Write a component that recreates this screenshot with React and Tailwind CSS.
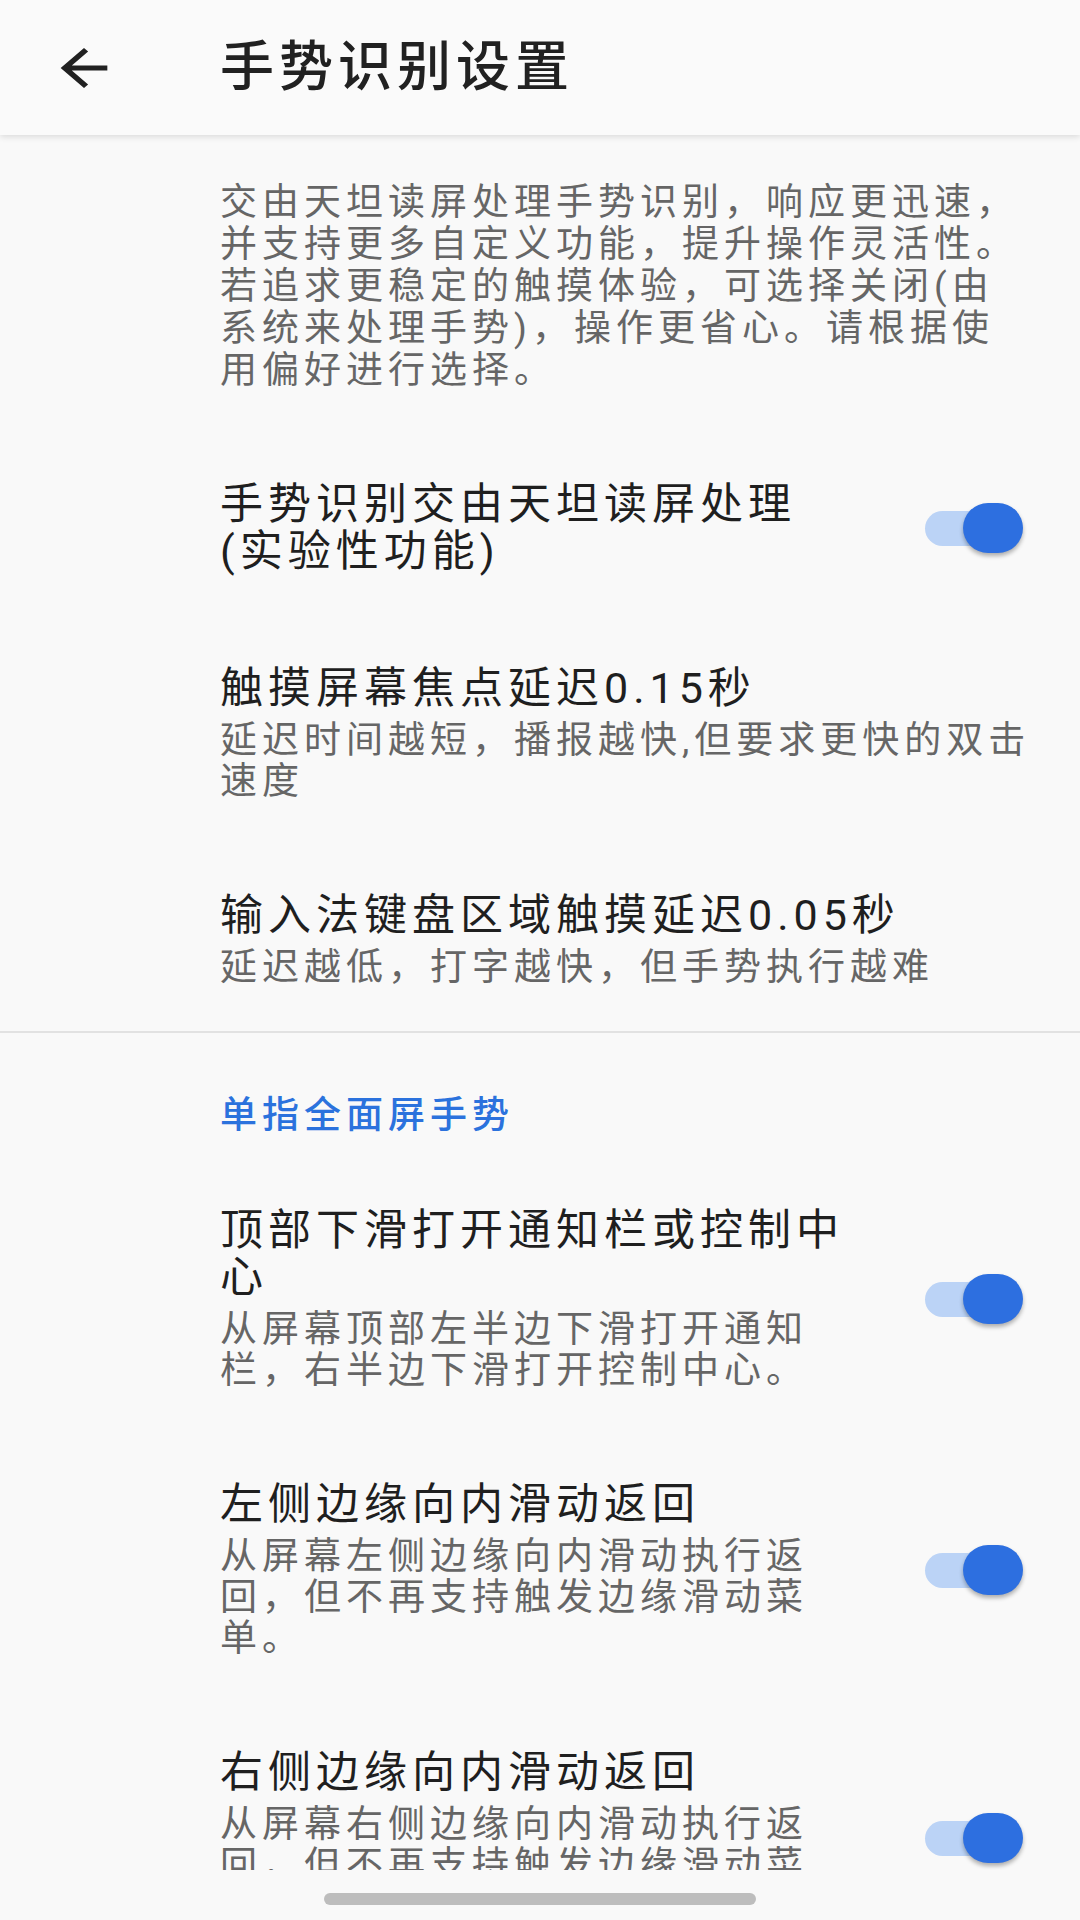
import React from 'react';

const Toggle = () => (
  <div className="relative h-[50px] w-[98px] shrink-0">
    <div className="absolute left-0 top-[8px] h-[35px] w-[82px] rounded-full bg-[#bbd3f6]" />
    <div className="absolute right-0 top-0 h-[50px] w-[60px] rounded-full bg-[#2d6fe0] shadow-[0_3px_4px_rgba(0,0,0,0.3)]" />
  </div>
);

const Lines = ({ lines }) =>
  lines.map((l, i) => (
    <React.Fragment key={i}>
      {i > 0 && <br />}
      {l}
    </React.Fragment>
  ));

const Row = ({ title, sub, toggle, className = 'py-[45px]' }) => (
  <div className={`flex items-center pl-[220px] pr-[57px] ${className}`}>
    <div className="flex-1 whitespace-nowrap">
      <div className="text-[43px] leading-[47px] tracking-[5px] text-[#1f1f1f]">
        <Lines lines={title} />
      </div>
      {sub && (
        <div className="mt-[8px] text-[37px] leading-[41px] tracking-[5px] text-[#666666]">
          <Lines lines={sub} />
        </div>
      )}
    </div>
    {toggle && <Toggle />}
  </div>
);

export default function App() {
  return (
    <div className="flex h-[1920px] w-[1080px] flex-col overflow-hidden bg-[#f9f9f9] font-['Roboto','Noto_Sans_CJK_SC',sans-serif]">
      <div className="relative z-10 flex h-[135px] shrink-0 items-center bg-[#fafafa] shadow-[0_2px_6px_rgba(0,0,0,0.12)]">
        <svg className="ml-[49px] h-[60px] w-[70px]" viewBox="0 0 24 24" preserveAspectRatio="none">
          <path d="M20 11H7.83l5.59-5.59L12 4l-8 8 8 8 1.41-1.41L7.83 13H20v-2z" fill="#212121" />
        </svg>
        <div className="ml-[101px] text-[54px] font-medium tracking-[5px] text-[#212121]">手势识别设置</div>
      </div>

      <div className="flex-1 overflow-hidden">
        <div className="whitespace-nowrap pb-[44px] pl-[220px] pt-[47px] text-[37px] leading-[42px] tracking-[5px] text-[#666666]">
          <Lines
            lines={[
              '交由天坦读屏处理手势识别，响应更迅速，',
              '并支持更多自定义功能，提升操作灵活性。',
              '若追求更稳定的触摸体验，可选择关闭(由',
              '系统来处理手势)，操作更省心。请根据使',
              '用偏好进行选择。',
            ]}
          />
        </div>

        <Row title={['手势识别交由天坦读屏处理', '(实验性功能)']} toggle />
        <Row
          title={['触摸屏幕焦点延迟0.15秒']}
          sub={['延迟时间越短，播报越快,但要求更快的双击', '速度']}
        />
        <Row
          title={['输入法键盘区域触摸延迟0.05秒']}
          sub={['延迟越低，打字越快，但手势执行越难']}
          className="pt-[45px] pb-[43px]"
        />

        <div className="h-[2px] bg-[#e2e2e2]" />

        <div className="pb-[25px] pl-[220px] pt-[62px] text-[37px] font-medium leading-[42px] tracking-[5px] text-[#2b72dd]">
          单指全面屏手势
        </div>

        <Row
          title={['顶部下滑打开通知栏或控制中', '心']}
          sub={['从屏幕顶部左半边下滑打开通知', '栏，右半边下滑打开控制中心。']}
          toggle
        />
        <Row
          title={['左侧边缘向内滑动返回']}
          sub={['从屏幕左侧边缘向内滑动执行返', '回，但不再支持触发边缘滑动菜', '单。']}
          toggle
        />
        <Row
          title={['右侧边缘向内滑动返回']}
          sub={['从屏幕右侧边缘向内滑动执行返', '回，但不再支持触发边缘滑动菜', '单。']}
          toggle
        />
      </div>

      <div className="flex h-[50px] shrink-0 justify-center bg-[#f9f9f9] pt-[23px]">
        <div className="h-[12px] w-[432px] rounded-full bg-[#bdbdbd]" />
      </div>
    </div>
  );
}
